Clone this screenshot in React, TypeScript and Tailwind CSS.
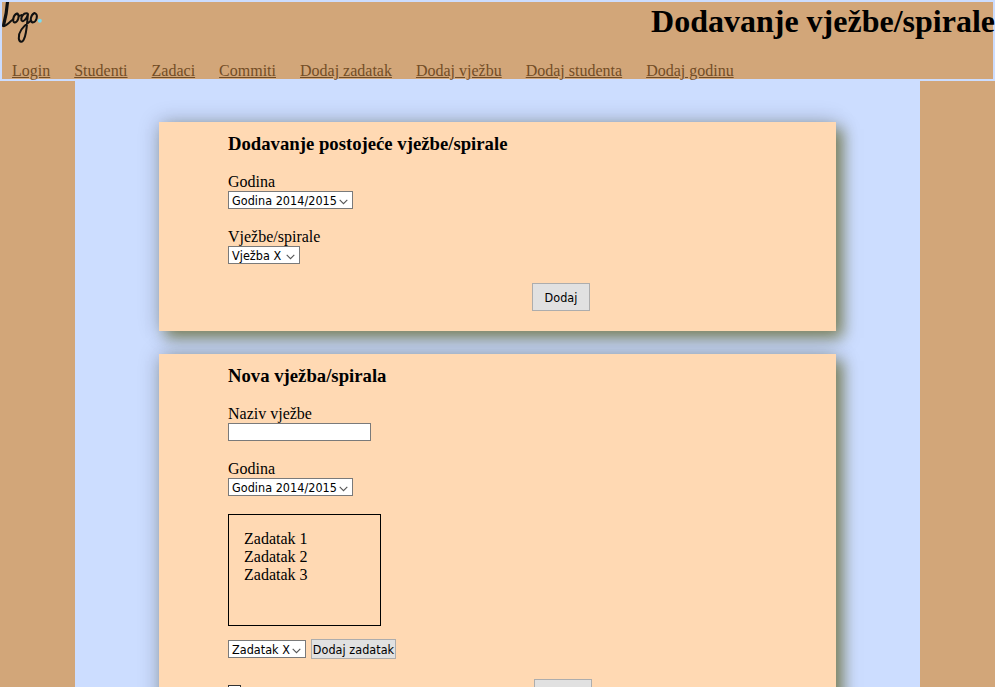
import type { ReactNode } from "react";

const links = ["Login", "Studenti", "Zadaci", "Commiti", "Dodaj zadatak", "Dodaj vježbu", "Dodaj studenta", "Dodaj godinu"];

function Logo() {
  return (
    <svg width="42" height="44" viewBox="0 0 42 44" fill="none" stroke="#111" strokeLinecap="round" strokeLinejoin="round" className="block shrink-0">
      <path d="M5.500 0C5 8 3.500 16 1.500 23.500" strokeWidth="3.200" />
      <path d="M1.500 24C4 24 6.500 21.500 9 19L11.500 17" strokeWidth="1.800" />
      <path d="M15 11.500C11 13 10 20 12.500 20.500C16 20.500 18 13.500 15.500 11.500C16 14 18 14.500 19.500 13" strokeWidth="2" />
      <path d="M25.500 11.500C21.500 10.500 18.500 15 19.500 18.500C21.500 21 25 16 26 12C25 19 25 31 22 37C20.500 41 17.500 40.500 16.800 36.500C16 30 22 23.500 28.500 19" strokeWidth="2" />
      <path d="M32.500 11C28.500 13 27.500 19.500 30.500 20.500C35 20 36 13 33.500 11.500" strokeWidth="2" />
      <circle cx="37.800" cy="18.700" r="2" fill="#79dcf2" stroke="none" />
    </svg>
  );
}

function Chevron() {
  return (
    <svg width="9" height="6" viewBox="0 0 9 6" fill="none" stroke="#555" strokeWidth="1.1" className="mt-[4px] shrink-0">
      <path d="M0.700 0.800L4.500 4.600L8.300 0.800" />
    </svg>
  );
}

function Select({ text, box }: { text: string; box: string }) {
  return (
    <button className={`flex h-[18px] items-center justify-between border border-[#7a7a7a] bg-white pr-[4px] pl-[3px] font-['DejaVu_Sans_Condensed','DejaVu_Sans',sans-serif] leading-4 text-black ${box}`}>
      <span className="pt-px text-[12.5px] tracking-[0.03px] whitespace-nowrap">{text}</span>
      <Chevron />
    </button>
  );
}

function Card({ title, size, children }: { title: string; size: string; children: ReactNode }) {
  return (
    <section className={`relative ml-[84px] w-[677px] bg-[#ffd9b3] pl-[69px] pt-[11px] shadow-[7px_7px_14px_rgba(85,85,0,0.58),0_0_20px_rgba(0,0,0,0.23)] ${size}`}>
      <h3 className="text-[18.72px] leading-[21px] font-bold">{title}</h3>
      {children}
    </section>
  );
}

export default function App() {
  return (
    <div className="h-[687px] w-[995px] overflow-hidden bg-[#d2a679] font-['Liberation_Serif',serif] text-base leading-[18px] text-black">
      <header className="h-[81px] border-2 border-[#ccddff]">
        <div className="flex h-[60px] items-start justify-between">
          <Logo />
          <h1 className="-mr-[2px] pt-px text-[32px] leading-[36px] font-bold whitespace-nowrap">Dodavanje vježbe/spirale</h1>
        </div>
        <nav className="flex gap-6 pl-[10px]">
          {links.map((link) => (
            <a key={link} href="#" className="h-[17px] whitespace-nowrap text-[#734d26] underline">{link}</a>
          ))}
        </nav>
      </header>
      <main className="ml-[75px] h-[606px] w-[845px] bg-[#ccddff] pt-[41px]">
        <Card title="Dodavanje postojeće vježbe/spirale" size="h-[209px]">
          <div className="mt-[19px]">Godina</div>
          <Select text="Godina 2014/2015" box="w-[125px]" />
          <div className="mt-[19px]">Vježbe/spirale</div>
          <Select text="Vježba X" box="w-[72px]" />
          <button className="mt-[19px] ml-[304px] block h-[28px] w-[58px] border border-[#adadad] bg-[#e1e1e1] pt-px font-['DejaVu_Sans_Condensed','DejaVu_Sans',sans-serif] text-[12.5px] tracking-[0.03px]">Dodaj</button>
        </Card>
        <div className="h-[23px]" />
        <Card title="Nova vježba/spirala" size="h-[360px]">
          <div className="mt-[19px]">Naziv vježbe</div>
          <input className="block h-[18px] w-[143px] border border-[#7a7a7a] bg-white" />
          <div className="mt-[19px]">Godina</div>
          <Select text="Godina 2014/2015" box="w-[125px]" />
          <div className="mt-[18px] h-[112px] w-[153px] border border-black pt-[15px] pl-[15px]">
            <div>Zadatak 1</div>
            <div>Zadatak 2</div>
            <div>Zadatak 3</div>
          </div>
          <div className="mt-[13px] flex items-center gap-[5px]">
            <Select text="Zadatak X" box="w-[78px]" />
            <button className="flex h-[20px] w-[85px] items-center justify-center border border-[#adadad] bg-[#e1e1e1] pt-px font-['DejaVu_Sans_Condensed','DejaVu_Sans',sans-serif] text-[12.5px] tracking-[0.03px] whitespace-nowrap">Dodaj zadatak</button>
          </div>
          <div className="mt-[20px] flex items-start">
            <div className="mt-[6px] h-[13px] w-[13px] border border-[#333] bg-white" />
            <div className="ml-[293px] h-[28px] w-[58px] border border-[#adadad] bg-[#e1e1e1]" />
          </div>
        </Card>
      </main>
    </div>
  );
}
